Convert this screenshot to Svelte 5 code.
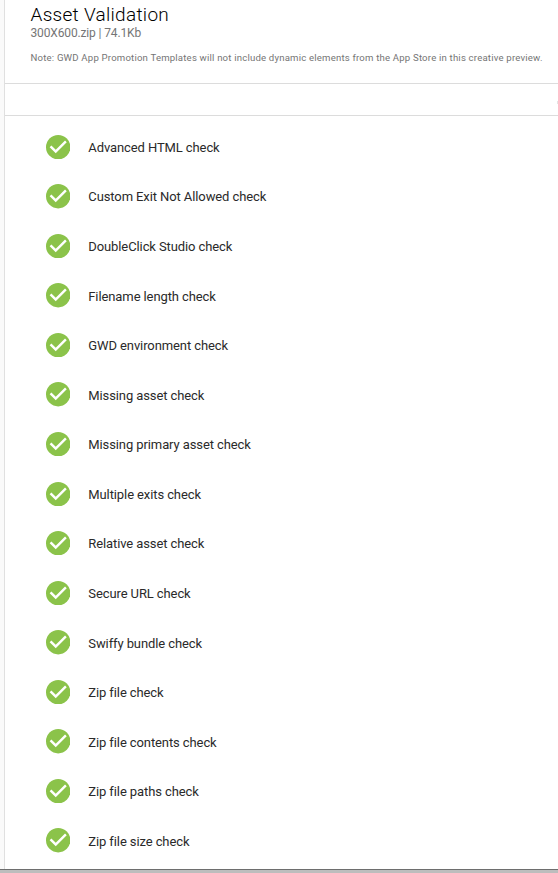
<script>
  const checks = [
    'Advanced HTML check',
    'Custom Exit Not Allowed check',
    'DoubleClick Studio check',
    'Filename length check',
    'GWD environment check',
    'Missing asset check',
    'Missing primary asset check',
    'Multiple exits check',
    'Relative asset check',
    'Secure URL check',
    'Swiffy bundle check',
    'Zip file check',
    'Zip file contents check',
    'Zip file paths check',
    'Zip file size check',
  ];
</script>

<div class="page">
  <main class="panel">
    <header>
      <h1>Asset Validation</h1>
      <p class="file">300X600.zip | 74.1Kb</p>
      <p class="note">Note: GWD App Promotion Templates will not include dynamic elements from the App Store in this creative preview.</p>
    </header>

    <div class="toolbar"><span class="edge"></span></div>

    <ul>
      {#each checks as check}
        <li>
          <svg class="icon" viewBox="2 2 20 20">
            <circle cx="12" cy="12" r="10" fill="#8bc34a" />
            <path d="M10 17l-5-5 1.41-1.41L10 14.17l7.59-7.59L19 8z" fill="#fff" />
          </svg>
          <span>{check}</span>
        </li>
      {/each}
    </ul>
  </main>
  <footer></footer>
</div>

<style>
  :global(body) {
    margin: 0;
    overflow: hidden;
  }

  .page {
    display: flex;
    flex-direction: column;
    box-sizing: border-box;
    height: 873px;
    background: #fafafa;
    font-family: Roboto, sans-serif;
  }

  .panel {
    flex: 1;
    min-height: 0;
    margin-left: 4px;
    border-left: 1px solid #e0e0e0;
    background: #fff;
    overflow: hidden;
  }

  header {
    box-sizing: border-box;
    height: 83px;
    padding: 3px 0 0 25.5px;
    white-space: nowrap;
  }

  h1 {
    margin: 0;
    font-size: 19px;
    font-weight: 300;
    line-height: 23px;
    letter-spacing: 0.29px;
    color: #000;
  }

  p {
    margin: 0;
    color: #757575;
  }

  .file {
    font-size: 12px;
    line-height: 14px;
    letter-spacing: -0.14px;
  }

  .note {
    margin-top: 11px;
    font-size: 9.6px;
    line-height: 14px;
    letter-spacing: 0.19px;
  }

  .toolbar {
    display: flex;
    align-items: center;
    justify-content: flex-end;
    height: 31px;
    border-top: 1px solid #dcdcdc;
    border-bottom: 1px solid #dcdcdc;
  }

  .edge {
    width: 1px;
    height: 3px;
    margin-top: 6px;
    background: #e4e4e4;
  }

  ul {
    margin: 0;
    padding: 5.6px 0 0 40.8px;
    list-style: none;
  }

  li {
    display: flex;
    align-items: center;
    height: 49.57px;
    font-size: 13px;
    letter-spacing: -0.1px;
    color: #2a2a2a;
  }

  .icon {
    width: 24.4px;
    height: 24.4px;
    margin: 0.8px 18.1px 0 0;
  }

  li span {
    padding-top: 2px;
  }

  footer {
    height: 3px;
    border-top: 1px solid #6e6e6e;
    background: #bdbdbd;
  }
</style>
